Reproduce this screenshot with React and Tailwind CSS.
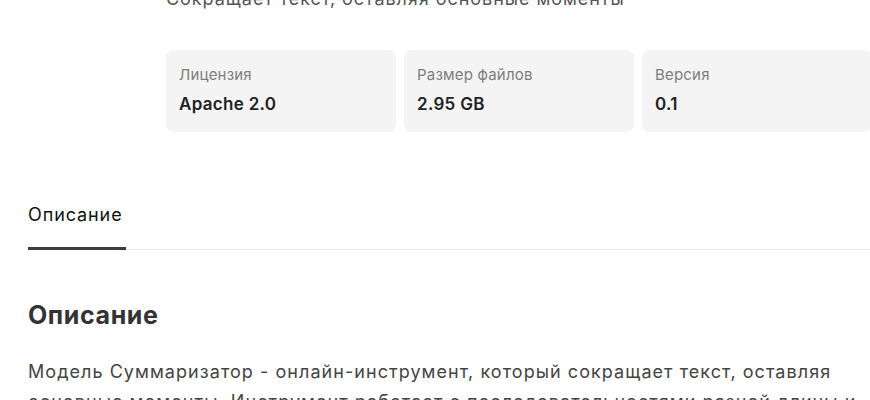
export default function App() {
  const cards = [
    { label: "Лицензия", value: "Apache 2.0" },
    { label: "Размер файлов", value: "2.95 GB" },
    { label: "Версия", value: "0.1" },
  ];
  return (
    <div
      className="w-[870px] h-[400px] overflow-hidden bg-white"
      style={{ fontFamily: "Inter, 'Noto Sans', sans-serif" }}
    >
      <div className="pl-[166px] mt-[-13px] h-[24px] text-[18px] leading-[24px] tracking-[0.95px] text-[#555]">
        Сокращает текст, оставляя основные моменты
      </div>
      <div className="pl-[166px] mt-[39px] flex gap-[8px] w-[1100px]">
        {cards.map((c) => (
          <div
            key={c.label}
            className="w-[230px] h-[82px] rounded-[8px] bg-[#f4f4f4] px-[13px] pt-[15px] shrink-0"
          >
            <div className="text-[15px] leading-[20px] tracking-[0.2px] text-[#7d7d7d]">{c.label}</div>
            <div className="mt-[9px] text-[17px] leading-[20px] tracking-[0.3px] font-semibold text-[#222]">
              {c.value}
            </div>
          </div>
        ))}
      </div>
      <div className="ml-[28px] mt-[71px] flex border-b border-[#ececec]">
        <div className="w-[98px] border-b-[3px] border-[#3a3f44] mb-[-1px] pb-[20px] text-[18px] leading-[24px] tracking-[0.9px] text-[#111] whitespace-nowrap">
          Описание
        </div>
      </div>
      <div className="pl-[28px] mt-[50px] text-[25px] leading-[30px] tracking-[0.6px] font-bold text-[#333]">
        Описание
      </div>
      <div className="pl-[28px] mt-[27px] w-[872px] text-[18px] leading-[30px] tracking-[1.05px] text-[#444]">
        Модель Суммаризатор - онлайн-инструмент, который сокращает текст, оставляя основные моменты. Инструмент работает с последовательностями разной длины и
      </div>
    </div>
  );
}
